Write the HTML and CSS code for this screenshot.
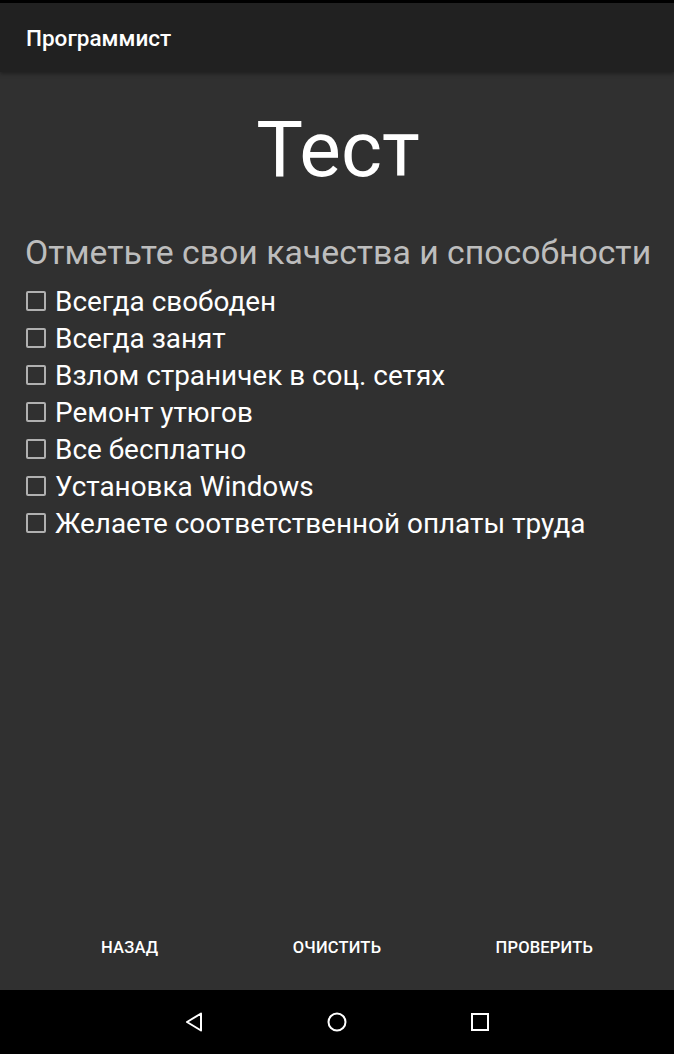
FILE: index.html
```html
<!DOCTYPE html>
<html lang="ru">
<head>
<meta charset="utf-8">
<link rel="stylesheet" href="styles.css">
</head>
<body>
<div class="screen">
  <div class="status"></div>
  <header class="toolbar">Программист</header>
  <main class="content">
    <h1 class="title">Тест</h1>
    <p class="subtitle">Отметьте свои качества и способности</p>
    <ul class="list">
      <li class="item"><span class="box"></span>Всегда свободен</li>
      <li class="item"><span class="box"></span>Всегда занят</li>
      <li class="item"><span class="box"></span>Взлом страничек в соц. сетях</li>
      <li class="item"><span class="box"></span>Ремонт утюгов</li>
      <li class="item"><span class="box"></span>Все бесплатно</li>
      <li class="item"><span class="box"></span>Установка Windows</li>
      <li class="item"><span class="box"></span>Желаете соответственной оплаты труда</li>
    </ul>
  </main>
  <div class="buttons">
    <span class="btn">НАЗАД</span>
    <span class="btn">ОЧИСТИТЬ</span>
    <span class="btn">ПРОВЕРИТЬ</span>
  </div>
  <nav class="navbar">
    <svg class="nav-icon" width="24" height="24" viewBox="0 0 24 24"><path d="M19 3.5 L5 12 L19 20.5 Z" fill="none" stroke="#fff" stroke-width="2" stroke-linejoin="round"/></svg>
    <svg class="nav-icon" width="24" height="24" viewBox="0 0 24 24"><circle cx="12" cy="12" r="8.5" fill="none" stroke="#fff" stroke-width="2"/></svg>
    <svg class="nav-icon" width="24" height="24" viewBox="0 0 24 24"><rect x="4" y="4" width="16" height="16" fill="none" stroke="#fff" stroke-width="2"/></svg>
  </nav>
</div>
</body>
</html>
```
FILE: styles.css
```css
* { box-sizing: border-box; }
html, body { margin: 0; padding: 0; background: #303030; }
body { font-family: Roboto, "Noto Sans", sans-serif; color: #fff; }
.screen { width: 674px; height: 1054px; display: flex; flex-direction: column; background: #303030; overflow: hidden; }
.status { height: 3px; background: #000; flex: none; }
.toolbar {
  height: 69px; flex: none; background: #212121;
  display: flex; align-items: center; padding: 0 26px 0 26px;
  font-size: 22.5px; font-weight: 500; color: #fff;
  box-shadow: 0 2px 4px rgba(0,0,0,0.35);
  position: relative; z-index: 1;
}
.content { flex: 1; padding: 0 20px 0 25px; }
.title { margin: 32px 0 0; text-align: center; font-weight: 400; font-size: 78.5px; line-height: 90px; color: #fff; padding-right: 3px; }
.subtitle { margin: 39px 0 0; font-size: 33.8px; line-height: 40px; color: #bdbdbd; white-space: nowrap; }
.list { list-style: none; margin: 10px 0 0; padding: 0; }
.item { display: flex; align-items: center; height: 37px; font-size: 27.9px; color: #fff; white-space: nowrap; }
.box { width: 20px; height: 20px; border: 2px solid #b0b0b0; border-radius: 2px; margin: 0 9px 0 1px; flex: none; position: relative; top: -1px; }
.buttons { height: 72px; flex: none; display: grid; grid-template-columns: 1fr 1fr 1fr; padding: 0 26px 14px; align-items: center; }
.btn { text-align: center; font-size: 16.5px; font-weight: 500; color: #fff; letter-spacing: 0.2px; }
.navbar { height: 64px; flex: none; background: #000; display: flex; justify-content: center; gap: 119px; align-items: center; }
.nav-icon { display: block; }
```
